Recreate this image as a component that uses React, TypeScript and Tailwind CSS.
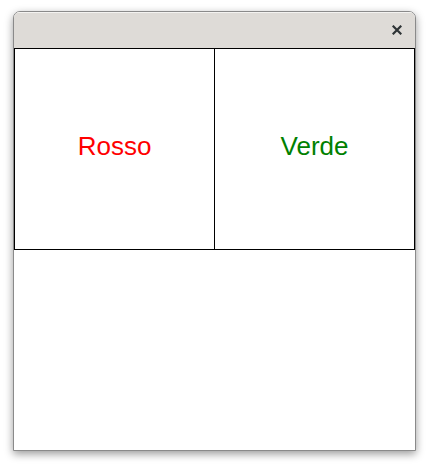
export default function App() {
  return (
    <div className="w-[428px] h-[466px] bg-white pt-[11px] pl-[13px]">
      <div className="w-[403px] h-[440px] flex flex-col border border-[#8a8a8a] rounded-t-[7px] shadow-[0_3px_9px_rgba(0,0,0,0.4)] overflow-hidden bg-white">
        <div className="h-[36px] shrink-0 flex items-center justify-end pr-[13px] bg-[#dedbd7] shadow-[inset_0_1px_0_#f4f3f1]">
          <svg width="10" height="10" viewBox="0 0 10 10">
            <path d="M1.5 1.5 L8.5 8.5 M8.5 1.5 L1.5 8.5" stroke="#2e3436" strokeWidth="2.2" strokeLinecap="square" />
          </svg>
        </div>
        <div className="flex">
          <div className="w-[201px] h-[202px] pb-[6px] border border-black flex items-center justify-center">
            <span className="text-[26px] text-[#ff0000] font-['Liberation_Sans',sans-serif]">Rosso</span>
          </div>
          <div className="w-[201px] h-[202px] pb-[6px] -ml-px border border-black flex items-center justify-center">
            <span className="text-[26px] text-[#008000] font-['Liberation_Sans',sans-serif]">Verde</span>
          </div>
        </div>
      </div>
    </div>
  );
}
